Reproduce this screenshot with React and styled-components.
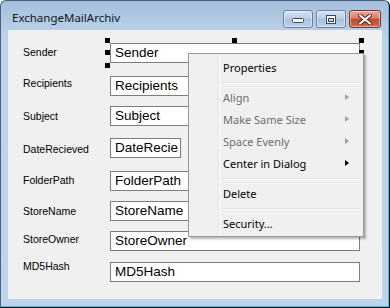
import React from 'react'
import styled, { createGlobalStyle } from 'styled-components'

const GlobalStyle = createGlobalStyle`
  html, body {
    margin: 0;
    padding: 0;
    background: #ffffff;
  }
`

const Window = styled.div`
  box-sizing: border-box;
  width: 390px;
  height: 308px;
  display: flex;
  flex-direction: column;
  border: 1px solid #4d617a;
  border-right-color: #0a0a0a;
  border-bottom-color: #0a0a0a;
  border-radius: 6px 6px 0 0;
  background: linear-gradient(#a4bedc 0px, #b3cbe6 22px, #bcd3ec 40px, #bdd4ec 100%);
  box-shadow: inset -1px -1px 0 #35c6e4;
`

const TitleBar = styled.div`
  height: 29px;
  display: flex;
  align-items: flex-start;
  flex-shrink: 0;
`

const Title = styled.div`
  margin: 9px 0 0 11px;
  flex: 1;
  font-family: 'Noto Sans', sans-serif;
  font-size: 11.5px;
  line-height: 16px;
  color: #101820;
`

const Caption = styled.div`
  display: flex;
  gap: 3px;
  margin: 9px 8px 0 0;
`

const CapButton = styled.div`
  box-sizing: border-box;
  width: ${p => p.w}px;
  height: 18px;
  display: flex;
  align-items: center;
  justify-content: center;
  border: 1px solid ${p => p.close ? '#7b3229' : '#6f839e'};
  border-radius: 3px;
  background: ${p => p.close
    ? 'linear-gradient(#e8a899 0%, #d8806f 45%, #c2472f 50%, #cf6a52 100%)'
    : 'linear-gradient(#d6e2f0 0%, #bccfe6 45%, #a9c0dc 50%, #bcd2ea 100%)'};
  box-shadow: inset 0 0 0 1px rgba(255, 255, 255, 0.45);
`

const Client = styled.div`
  position: relative;
  flex: 1;
  margin: 0 7px 8px 7px;
  background: #f0f0f0;
  padding: 11px 0 0 15px;
`

const Row = styled.div`
  display: flex;
  align-items: flex-start;
  height: ${p => p.h}px;
`

const Label = styled.div`
  width: 87px;
  margin-top: ${p => p.off + 2}px;
  font-family: 'Liberation Sans', Arial, sans-serif;
  font-size: 10.5px;
  line-height: 13px;
  color: #000;
`

const FieldWrap = styled.div`
  position: relative;
  margin-top: 2px;
`

const TextBox = styled.div`
  box-sizing: border-box;
  width: ${p => p.w}px;
  height: 20px;
  padding-left: 4px;
  border: 1px solid #7d7d7d;
  background: #ffffff;
  font-family: 'Liberation Sans', Arial, sans-serif;
  font-size: 13.5px;
  line-height: 18px;
  color: #000;
  white-space: nowrap;
  overflow: hidden;
`

const Handle = styled.span`
  position: absolute;
  width: 5px;
  height: 5px;
  background: #000;
  left: ${p => p.x}px;
  top: ${p => p.y}px;
`

const Menu = styled.div`
  position: absolute;
  left: 180px;
  top: 23px;
  box-sizing: border-box;
  width: 176px;
  height: 184px;
  padding: 2px;
  border: 1px solid #979797;
  background: #f0f0f0;
  box-shadow: 2px 2px 2px rgba(0, 0, 0, 0.28);
  font-family: 'Noto Sans', sans-serif;
  font-size: 11px;
  &:before {
    content: '';
    position: absolute;
    left: 29px;
    top: 2px;
    bottom: 2px;
    width: 1px;
    background: #e2e3e3;
    box-shadow: 1px 0 0 #ffffff;
  }
`

const Item = styled.div`
  height: 22px;
  display: flex;
  align-items: center;
  padding-left: 32px;
  padding-right: 12px;
  color: ${p => p.disabled ? '#6d6d6d' : '#000'};
`

const ItemText = styled.span`
  flex: 1;
`

const Arrow = styled.span`
  width: 0;
  height: 0;
  border-top: 3.5px solid transparent;
  border-bottom: 3.5px solid transparent;
  border-left: 4px solid ${p => p.disabled ? '#a0a0a0' : '#000'};
`

const Separator = styled.div`
  height: 8px;
  display: flex;
  align-items: center;
  padding-left: 30px;
  padding-right: 1px;
  &:after {
    content: '';
    flex: 1;
    height: 1px;
    background: #e0e0e0;
    box-shadow: 0 1px 0 #ffffff;
  }
`

const MinGlyph = () => (
  <svg width="12" height="8" viewBox="0 0 12 8">
    <rect x="0.5" y="3.5" width="11" height="4" rx="1" fill="#fff" stroke="#3b4a5e" />
  </svg>
)

const MaxGlyph = () => (
  <svg width="10" height="9" viewBox="0 0 10 9">
    <rect x="0.5" y="0.5" width="9" height="8" fill="#fff" stroke="#3b4a5e" />
    <rect x="2.5" y="3.5" width="5" height="3" fill="#c5d3e4" stroke="#3b4a5e" />
  </svg>
)

const CloseGlyph = () => (
  <svg width="14" height="11" viewBox="0 0 14 11">
    <path d="M2 1.5 L12 9.5 M12 1.5 L2 9.5" stroke="#5b1f18" strokeWidth="4" strokeLinecap="round" />
    <path d="M2 1.5 L12 9.5 M12 1.5 L2 9.5" stroke="#ffffff" strokeWidth="2.2" strokeLinecap="round" />
  </svg>
)

const fields = [
  { label: 'Sender', off: 3, h: 33, w: 250, selected: true },
  { label: 'Recipients', off: 1, h: 30, w: 250 },
  { label: 'Subject', off: 4, h: 32, w: 250 },
  { label: 'DateRecieved', off: 5, h: 33, w: 71, value: 'DateRecie' },
  { label: 'FolderPath', off: 3, h: 30, w: 250 },
  { label: 'StoreName', off: 4, h: 30, w: 250 },
  { label: 'StoreOwner', off: 2, h: 31, w: 250 },
  { label: 'MD5Hash', off: -2, h: 30, w: 250 },
]

const handles = [
  [-5, -5], [122, -5], [249, -5],
  [-5, 7], [249, 7],
  [-5, 20], [122, 20], [249, 20],
]

const App = () => {
  return (
    <>
      <GlobalStyle />
      <Window>
        <TitleBar>
          <Title>ExchangeMailArchiv</Title>
          <Caption>
            <CapButton w={30}><MinGlyph /></CapButton>
            <CapButton w={30}><MaxGlyph /></CapButton>
            <CapButton w={32} close><CloseGlyph /></CapButton>
          </Caption>
        </TitleBar>
        <Client>
          {fields.map(f => (
            <Row key={f.label} h={f.h}>
              <Label off={f.off}>{f.label}</Label>
              <FieldWrap>
                <TextBox w={f.w}>{f.value || f.label}</TextBox>
                {f.selected && handles.map(([x, y]) => <Handle key={x + '-' + y} x={x} y={y} />)}
              </FieldWrap>
            </Row>
          ))}
          <Menu>
            <Item><ItemText>Properties</ItemText></Item>
            <Separator />
            <Item disabled><ItemText>Align</ItemText><Arrow disabled /></Item>
            <Item disabled><ItemText>Make Same Size</ItemText><Arrow disabled /></Item>
            <Item disabled><ItemText>Space Evenly</ItemText><Arrow disabled /></Item>
            <Item><ItemText>Center in Dialog</ItemText><Arrow /></Item>
            <Separator />
            <Item><ItemText>Delete</ItemText></Item>
            <Separator />
            <Item><ItemText>Security...</ItemText></Item>
          </Menu>
        </Client>
      </Window>
    </>
  )
}

export default App
